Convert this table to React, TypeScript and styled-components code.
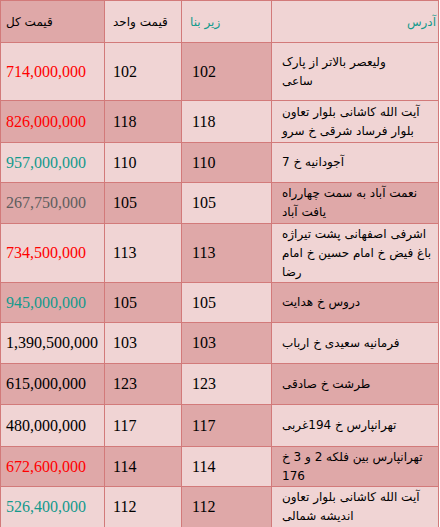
import styled, { createGlobalStyle, css } from "styled-components";

const GlobalStyle = createGlobalStyle`
  body {
    margin: 0;
    background: #ffffff;
  }
`;

const RED = "#ff0000";
const TEAL = "#139a8c";
const GRAY = "#5e5e5e";
const BLACK = "#000000";

type Row = {
  address: string[];
  area: string;
  unit: string;
  total: string;
  color: string;
  h: number;
};

const rows: Row[] = [
  { address: ["ولیعصر بالاتر از پارک", "ساعی"], area: "102", unit: "102", total: "714,000,000", color: RED, h: 58 },
  { address: ["آیت الله کاشانی بلوار تعاون", "بلوار فرساد شرقی خ سرو"], area: "118", unit: "118", total: "826,000,000", color: RED, h: 42 },
  { address: ["آجودانیه خ 7"], area: "110", unit: "110", total: "957,000,000", color: TEAL, h: 40 },
  { address: ["نعمت آباد به سمت چهارراه", "یافت آباد"], area: "105", unit: "105", total: "267,750,000", color: GRAY, h: 41 },
  { address: ["اشرفی اصفهانی پشت تیراژه", "باغ فیض خ امام حسین خ امام", "رضا"], area: "113", unit: "113", total: "734,500,000", color: RED, h: 59 },
  { address: ["دروس خ هدایت"], area: "105", unit: "105", total: "945,000,000", color: TEAL, h: 40 },
  { address: ["فرمانیه سعیدی خ ارباب"], area: "103", unit: "103", total: "1,390,500,000", color: BLACK, h: 41 },
  { address: ["طرشت خ صادقی"], area: "123", unit: "123", total: "615,000,000", color: BLACK, h: 41 },
  { address: ["تهرانپارس خ 194غربی"], area: "117", unit: "117", total: "480,000,000", color: BLACK, h: 42 },
  { address: ["تهرانپارس بین فلکه 2 و 3 خ", "176"], area: "114", unit: "114", total: "672,600,000", color: RED, h: 40 },
  { address: ["آیت الله کاشانی بلوار تعاون", "اندیشه شمالی"], area: "112", unit: "112", total: "526,400,000", color: TEAL, h: 41 },
];

const App = () => {
  return (
    <>
      <GlobalStyle />
      <PriceTable>
        <colgroup>
          <col style={{ width: 104 }} />
          <col style={{ width: 77 }} />
          <col style={{ width: 90 }} />
          <col style={{ width: 167 }} />
        </colgroup>
        <thead>
          <Tr $h={42}>
            <HeadCell $dark $pad={5}>قیمت کل</HeadCell>
            <HeadCell $pad={8}>قیمت واحد</HeadCell>
            <HeadCell $pad={8} $teal>زیر بنا</HeadCell>
            <HeadCell $pad={0} $teal $right>آدرس</HeadCell>
          </Tr>
        </thead>
        <tbody>
          {rows.map((r, i) => {
            const even = i % 2 === 1;
            return (
              <Tr key={i} $h={r.h}>
                <NumCell $dark={even} $pad={5} style={{ color: r.color }}>
                  {r.total}
                </NumCell>
                <NumCell $dark={even} $pad={8}>
                  {r.unit}
                </NumCell>
                <NumCell $dark={!even} $pad={10}>
                  {r.area}
                </NumCell>
                <AddressCell $dark={even && i !== 1}>
                  {r.address.map((line, j) => (
                    <AddressLine key={j}>{line}</AddressLine>
                  ))}
                </AddressCell>
              </Tr>
            );
          })}
        </tbody>
      </PriceTable>
    </>
  );
};

export default App;

const PriceTable = styled.table`
  width: 439px;
  table-layout: fixed;
  border-collapse: collapse;
  border: 1px solid #d27a7a;
`;

const Tr = styled.tr<{ $h: number }>`
  height: ${(p) => p.$h}px;
`;

type CellProps = { $dark?: boolean; $pad?: number };

const cellBase = css<CellProps>`
  border: 1px solid #d27a7a;
  background-color: ${(p) => (p.$dark ? "#dfa8a8" : "#f0d4d4")};
  padding: 0 0 0 ${(p) => p.$pad ?? 5}px;
  vertical-align: middle;
`;

const HeadCell = styled.th<CellProps & { $teal?: boolean; $right?: boolean }>`
  ${cellBase}
  direction: rtl;
  text-align: ${(p) => (p.$right ? "right" : "left")};
  padding-right: ${(p) => (p.$right ? 2 : 0)}px;
  font-family: "DejaVu Sans", sans-serif;
  font-size: 12px;
  font-weight: normal;
  color: ${(p) => (p.$teal ? "#139a8c" : "#000000")};
`;

const NumCell = styled.td<CellProps>`
  ${cellBase}
  font-family: "Liberation Serif", "Times New Roman", serif;
  font-size: 16px;
  color: #000000;
  text-align: left;
`;

const AddressCell = styled.td<CellProps>`
  ${cellBase}
  direction: rtl;
  text-align: left;
  padding: 0 4px 0 10px;
  font-family: "DejaVu Sans", sans-serif;
  font-size: 12px;
  color: #000000;
`;

const AddressLine = styled.div`
  line-height: 19px;
  white-space: nowrap;
`;
